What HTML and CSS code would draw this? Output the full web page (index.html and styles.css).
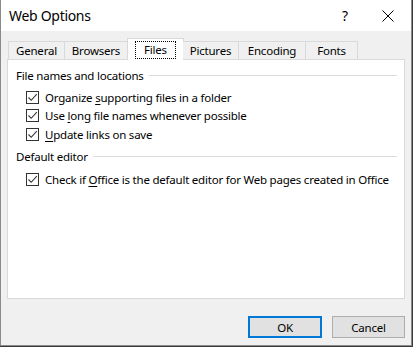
FILE: index.html
```html
<!DOCTYPE html>
<html>
<head>
<meta charset="utf-8">
<link rel="stylesheet" href="styles.css">
</head>
<body>
<div class="window">
  <div class="titlebar">
    <span class="title">Web Options</span>
    <span class="help">?</span>
    <span class="close"><svg width="12" height="12" viewBox="0 0 12 12"><path d="M0.5 0.5 L11.5 11.5 M11.5 0.5 L0.5 11.5" stroke="#000" stroke-width="1" fill="none"/></svg></span>
  </div>
  <div class="body">
    <div class="tabs">
      <div class="tab t-general">General</div>
      <div class="tab t-browsers">Browsers</div>
      <div class="tab selected t-files"><span class="focus">Files</span></div>
      <div class="tab t-pictures">Pictures</div>
      <div class="tab t-encoding">Encoding</div>
      <div class="tab t-fonts">Fonts</div>
    </div>
    <div class="panel">
      <div class="group-head g1"><span>File names and locations</span><i class="rule"></i></div>
      <div class="check c1"><span class="box"><svg width="11" height="11" viewBox="0 0 11 11"><path d="M1.5 5.5 L4.2 8.3 L9.8 2.2" stroke="#333" stroke-width="1.1" fill="none"/></svg></span><span>Organize <u>s</u>upporting files in a folder</span></div>
      <div class="check c2"><span class="box"><svg width="11" height="11" viewBox="0 0 11 11"><path d="M1.5 5.5 L4.2 8.3 L9.8 2.2" stroke="#333" stroke-width="1.1" fill="none"/></svg></span><span>Use <u>l</u>ong file names whenever possible</span></div>
      <div class="check c3"><span class="box"><svg width="11" height="11" viewBox="0 0 11 11"><path d="M1.5 5.5 L4.2 8.3 L9.8 2.2" stroke="#333" stroke-width="1.1" fill="none"/></svg></span><span><u>U</u>pdate links on save</span></div>
      <div class="group-head g2"><span>Default editor</span><i class="rule"></i></div>
      <div class="check c4"><span class="box"><svg width="11" height="11" viewBox="0 0 11 11"><path d="M1.5 5.5 L4.2 8.3 L9.8 2.2" stroke="#333" stroke-width="1.1" fill="none"/></svg></span><span>Check if <u>O</u>ffice is the default editor for Web pages created in Office</span></div>
    </div>
    <div class="buttons">
      <div class="btn default">OK</div>
      <div class="btn">Cancel</div>
    </div>
  </div>
</div>
</body>
</html>
```
FILE: styles.css
```css
html, body {
  margin: 0;
  padding: 0;
  background: #3a3a3a;
}
body {
  width: 413px;
  height: 347px;
  overflow: hidden;
  font-family: "Noto Sans", "Open Sans", sans-serif;
  font-size: 11.5px;
  letter-spacing: -0.22px;
  color: #000;
}
.window {
  width: 410px;
  height: 345px;
  border: 1px solid #8a8a8a;
  border-top: none;
  background: #f0f0f0;
  display: flex;
  flex-direction: column;
}
.titlebar {
  height: 31px;
  background: #fff;
  display: flex;
  align-items: center;
  flex: none;
}
.title {
  font-size: 14px;
  letter-spacing: -0.3px;
  margin-left: 8px;
  flex: 1;
}
.help {
  font-size: 14px;
  width: 12px;
  margin-right: 28px;
}
.close {
  display: flex;
  margin-right: 17px;
}
.body {
  flex: 1;
  display: flex;
  flex-direction: column;
  padding: 7px 6px 0 6px;
}
.tabs {
  display: flex;
  height: 21px;
  padding-left: 1px;
  align-items: flex-end;
  position: relative;
  z-index: 1;
}
.tab {
  height: 18px;
  box-sizing: border-box;
  border: 1px solid #d9d9d9;
  border-bottom: none;
  border-left: none;
  background: #f0f0f0;
  display: flex;
  align-items: center;
  justify-content: center;
  line-height: 14px;
  padding-top: 1px;
}
.t-general { width: 57px; border-left: 1px solid #d9d9d9; }
.t-browsers { width: 63px; }
.t-files { width: 57px; }
.t-pictures { width: 56px; }
.t-encoding { width: 67px; }
.t-fonts { width: 52px; }
.tab.selected {
  height: 22px;
  background: #fff;
  border: 1px solid #d9d9d9;
  border-bottom: none;
  margin-left: -1px;
  margin-right: -1px;
  margin-bottom: -1px;
  padding-top: 0;
}
.focus {
  border: 1px dotted #000;
  padding: 1px 8px 1px 8px;
  line-height: 14px;
}
.panel {
  height: 238px;
  background: #fff;
  border: 1px solid #d9d9d9;
  display: flex;
  flex-direction: column;
  padding: 0 7px 0 8px;
}
.group-head {
  display: flex;
  align-items: center;
  height: 16px;
}
.group-head .rule {
  flex: 1;
  height: 1px;
  background: #dcdcdc;
  margin-left: 5px;
}
.g1 { margin-top: 7px; }
.g2 { margin-top: 5px; }
.check {
  display: flex;
  align-items: center;
  height: 18.5px;
  margin-left: 10px;
}
.c1 { margin-top: 5px; }
.c4 { margin-top: 6px; }
.box {
  width: 11px;
  height: 11px;
  border: 1px solid #333;
  background: #fff;
  display: flex;
  margin-right: 6px;
  flex: none;
}
u {
  text-decoration: underline;
  text-underline-offset: 2px;
}
.buttons {
  display: flex;
  justify-content: flex-end;
  gap: 10px;
  padding-top: 17px;
  padding-right: 0;
}
.btn {
  width: 71px;
  height: 20px;
  border: 1px solid #adadad;
  background: #e1e1e1;
  display: flex;
  align-items: center;
  justify-content: center;
}
.btn.default {
  width: 70px;
  height: 18px;
  border: 2px solid #0078d7;
}
```
